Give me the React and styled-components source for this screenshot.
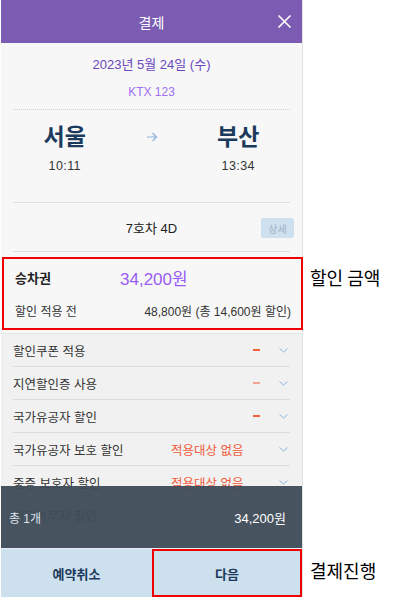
import React from 'react';
import styled, { createGlobalStyle } from 'styled-components';

const GlobalStyle = createGlobalStyle`
  html, body {
    margin: 0;
    padding: 0;
    background: #ffffff;
    font-family: "Liberation Sans", "Noto Sans CJK KR", sans-serif;
  }
  * { box-sizing: border-box; }
`;

const Page = styled.div`
  width: 420px;
  height: 597px;
  display: flex;
  background: #fff;
`;

const Phone = styled.div`
  position: relative;
  width: 302px;
  height: 597px;
  margin-left: 1px;
  background: #f7f7f7;
  border-right: 1px solid #e2e2e2;
  display: flex;
  flex-direction: column;
`;

const Header = styled.div`
  position: relative;
  height: 43px;
  background: #7b5cb2;
  display: flex;
  align-items: center;
  justify-content: center;
  color: #fff;
  font-size: 14px;
`;

const CloseButton = styled.button`
  position: absolute;
  right: 10px;
  top: 14px;
  width: 15px;
  height: 15px;
  padding: 0;
  border: 0;
  background: none;
  display: flex;
`;

const TripInfo = styled.div`
  padding: 0 12px;
  display: flex;
  flex-direction: column;
  align-items: center;
`;

const DateText = styled.div`
  margin-top: 14px;
  height: 16px;
  line-height: 16px;
  font-size: 13px;
  color: #6a48be;
`;

const TrainName = styled.div`
  margin-top: 11px;
  height: 16px;
  line-height: 16px;
  font-size: 12px;
  color: #a06ef3;
`;

const DottedLine = styled.div`
  align-self: stretch;
  margin-top: 9px;
  border-top: 1px dotted #cfcfcf;
`;

const Route = styled.div`
  align-self: stretch;
  display: grid;
  grid-template-columns: 1fr 70px 1fr;
  margin-top: 13px;
  margin-bottom: 28px;
`;

const Station = styled.div`
  display: flex;
  flex-direction: column;
  align-items: center;
`;

const City = styled.div`
  font-size: 23px;
  font-weight: 700;
  line-height: 28px;
  color: #1c3a5c;
`;

const Time = styled.div`
  margin-top: 7px;
  font-size: 12.5px;
  line-height: 16px;
  color: #333;
  letter-spacing: 0.4px;
`;

const Arrow = styled.div`
  display: flex;
  justify-content: center;
  padding-top: 9px;
`;

const Divider = styled.div`
  align-self: stretch;
  border-top: 1px solid #dedede;
`;

const SeatRow = styled.div`
  align-self: stretch;
  position: relative;
  height: 48px;
  display: flex;
  align-items: center;
  justify-content: center;
  font-size: 13px;
  color: #222;
`;

const DetailButton = styled.button`
  position: absolute;
  right: -4px;
  top: 15px;
  width: 33px;
  height: 20px;
  border: 0;
  border-radius: 2px;
  background: #cfe0ee;
  color: #9fb2c6;
  font-family: inherit;
  font-size: 10px;
  padding: 0;
`;

const FareWrap = styled.div`
  position: relative;
  margin-top: 5px;
  margin-left: 1px;
`;

const FareBox = styled.div`
  width: 301px;
  height: 73px;
  border: 2px solid #f00000;
  padding: 0 10px 0 11px;
  display: flex;
  flex-direction: column;
`;

const FareTop = styled.div`
  display: flex;
  align-items: center;
  height: 32px;
  margin-top: 2px;
`;

const FareLabel = styled.div`
  width: 105px;
  font-size: 13px;
  font-weight: 700;
  color: #222;
`;

const FareAmount = styled.div`
  font-size: 17px;
  color: #9a5bf4;
`;

const FareBottom = styled.div`
  display: flex;
  justify-content: space-between;
  align-items: center;
  height: 20px;
  margin-top: 7px;
  font-size: 12px;
  color: #333;
`;

const Callout = styled.div`
  position: absolute;
  left: calc(100% + 8px);
  top: ${p => p.$top}px;
  white-space: nowrap;
  font-family: "Noto Sans CJK KR", sans-serif;
  font-size: 18px;
  color: #000;
`;

const DiscountList = styled.div`
  margin-top: 3px;
  background: #f1f1f1;
  border-top: 1px solid #e6e6e6;
  padding: 0 12px;
  flex: 1;
`;

const DiscountRow = styled.div`
  height: 33px;
  display: flex;
  align-items: center;
  border-bottom: 1px solid #dcdcdc;
  font-size: 12.5px;
  color: #333;
`;

const RowLabel = styled.div`
  width: 158px;
`;

const NotApplicable = styled.div`
  flex: 1;
  color: #f05a3a;
  font-size: 12.5px;
`;

const Dash = styled.div`
  margin-left: auto;
  width: 7px;
  height: 2px;
  background: ${p => (p.$muted ? '#f3a595' : '#f2603e')};
  margin-right: 19px;
`;

const Chevron = styled.svg`
  width: 9px;
  height: 5px;
  margin-right: 2px;
  margin-left: ${p => (p.$push ? 'auto' : '0')};
`;

const BottomPanel = styled.div`
  position: absolute;
  left: 0;
  right: 0;
  bottom: 0;
  display: flex;
  flex-direction: column;
`;

const Summary = styled.div`
  height: 62px;
  background: rgba(64, 76, 88, 0.96);
  display: flex;
  align-items: center;
  justify-content: space-between;
  padding: 0 16px 0 8px;
  color: #fff;
`;

const SummaryCount = styled.div`
  font-size: 12px;
  color: #dde4ec;
`;

const SummaryTotal = styled.div`
  font-size: 13px;
`;

const ButtonRow = styled.div`
  display: grid;
  grid-template-columns: 151px 150px;
  height: 49px;
  background: #cde0ee;
  border-top: 1px solid #e8eef4;
`;

const ActionWrap = styled.div`
  position: relative;
`;

const ActionButton = styled.button`
  width: 100%;
  height: 48px;
  border: ${p => (p.$highlight ? '2px solid #f00000' : '0')};
  background: transparent;
  font-family: inherit;
  font-size: 13px;
  font-weight: 700;
  color: #1c3a5c;
  padding: 0;
`;

const discounts = [
  { label: '할인쿠폰 적용', dash: true },
  { label: '지연할인증 사용', dash: true, muted: true },
  { label: '국가유공자 할인', dash: true },
  { label: '국가유공자 보호 할인', none: true },
  { label: '중증 보호자 할인', none: true },
  { label: '의무복무자 할인', dash: true },
];

function App() {
  return (
    <Page>
      <GlobalStyle />
      <Phone>
        <Header>
          결제
          <CloseButton aria-label="닫기">
            <svg width="15" height="15" viewBox="0 0 15 15">
              <path d="M1.5 1.5 L13.5 13.5 M13.5 1.5 L1.5 13.5" stroke="#fff" strokeWidth="1.6" />
            </svg>
          </CloseButton>
        </Header>

        <TripInfo>
          <DateText>2023년 5월 24일 (수)</DateText>
          <TrainName>KTX 123</TrainName>
          <DottedLine />
          <Route>
            <Station>
              <City>서울</City>
              <Time>10:11</Time>
            </Station>
            <Arrow>
              <svg width="12" height="10" viewBox="0 0 12 10">
                <path d="M1 5 H10.5 M6.5 1 L10.5 5 L6.5 9" fill="none" stroke="#8cb6e0" strokeWidth="1.2" />
              </svg>
            </Arrow>
            <Station>
              <City>부산</City>
              <Time>13:34</Time>
            </Station>
          </Route>
          <Divider />
          <SeatRow>
            7호차 4D
            <DetailButton>상세</DetailButton>
          </SeatRow>
          <Divider />
        </TripInfo>

        <FareWrap>
          <FareBox>
            <FareTop>
              <FareLabel>승차권</FareLabel>
              <FareAmount>34,200원</FareAmount>
            </FareTop>
            <FareBottom>
              <span>할인 적용 전</span>
              <span>48,800원 (총 14,600원 할인)</span>
            </FareBottom>
          </FareBox>
          <Callout $top={7}>할인 금액</Callout>
        </FareWrap>

        <DiscountList>
          {discounts.map(d => (
            <DiscountRow key={d.label}>
              <RowLabel>{d.label}</RowLabel>
              {d.none && <NotApplicable>적용대상 없음</NotApplicable>}
              {d.dash && <Dash $muted={d.muted} />}
              <Chevron viewBox="0 0 9 5" $push={!d.dash && !d.none}>
                <path d="M0.5 0.5 L4.5 4 L8.5 0.5" fill="none" stroke="#8cb6e0" strokeWidth="1" />
              </Chevron>
            </DiscountRow>
          ))}
        </DiscountList>

        <BottomPanel>
          <Summary>
            <SummaryCount>총 1개</SummaryCount>
            <SummaryTotal>34,200원</SummaryTotal>
          </Summary>
          <ButtonRow>
            <ActionWrap>
              <ActionButton>예약취소</ActionButton>
            </ActionWrap>
            <ActionWrap>
              <ActionButton $highlight>다음</ActionButton>
              <Callout $top={8}>결제진행</Callout>
            </ActionWrap>
          </ButtonRow>
        </BottomPanel>
      </Phone>
    </Page>
  );
}

export default App;
